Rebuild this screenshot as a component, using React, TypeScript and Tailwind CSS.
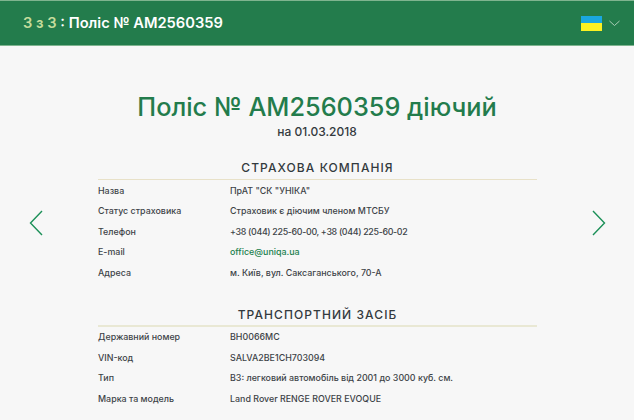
const font = { fontFamily: '"Inter", "Noto Sans", sans-serif' };

const companyRows: [string, string][] = [
  ['Назва', 'ПрАТ "СК "УНІКА"'],
  ['Статус страховика', 'Страховик є діючим членом МТСБУ'],
  ['Телефон', '+38 (044) 225-60-00, +38 (044) 225-60-02'],
  ['E-mail', 'office@uniqa.ua'],
  ['Адреса', 'м. Київ, вул. Саксаганського, 70-А'],
];

const vehicleRows: [string, string][] = [
  ['Державний номер', 'ВН0066МС'],
  ['VIN-код', 'SALVA2BE1CH703094'],
  ['Тип', 'В3: легковий автомобіль від 2001 до 3000 куб. см.'],
  ['Марка та модель', 'Land Rover RENGE ROVER EVOQUE'],
];

function Section({ title, rows, rule }: { title: string; rows: [string, string][]; rule: string }) {
  return (
    <section>
      <h2 className={`h-[22px] border-b text-center text-[12px] leading-[19px] font-medium tracking-[0.09em] text-[#333a3e] ${rule}`}>
        {title}
      </h2>
      <div>
        {rows.map(([label, value]) => (
          <div key={label} className="flex h-[20.5px] items-center text-[8.9px] font-medium text-[#3d4347]">
            <div className="w-[132px] shrink-0">{label}</div>
            <div className={value.includes('@') ? 'text-[#20804d]' : value.startsWith('+') ? 'tracking-[-0.037em]' : ''}>{value}</div>
          </div>
        ))}
      </div>
    </section>
  );
}

function Arrow({ flip }: { flip?: boolean }) {
  return (
    <svg width="14" height="26" viewBox="0 0 14 26" fill="none" className={flip ? 'rotate-180' : ''}>
      <path d="M13 1 1.5 13 13 25" stroke="#1c9058" strokeWidth="1.4" />
    </svg>
  );
}

export default function App() {
  return (
    <div className="h-[420px] w-[634px] overflow-hidden bg-[#f7f7f7]" style={font}>
      <header className="flex h-[46px] items-center justify-between border-y border-y-[#7fb48f] bg-[#237c4c] pr-[14px] pl-[23px]">
        <div className="text-[14.7px] font-semibold text-white">
          <span className="text-[#c5dc9c]">3 з 3</span> : Поліс № АМ2560359
        </div>
        <div className="flex items-center gap-[7px]">
          <div className="h-[15px] w-[21px]">
            <div className="h-[7.5px] bg-[#1aa7e0]" />
            <div className="h-[7.5px] bg-[#fbf122]" />
          </div>
          <svg width="11" height="7" viewBox="0 0 11 7" fill="none">
            <path d="M.5 1 5.5 5.5 10.5 1" stroke="#a9cdb6" strokeWidth="1" />
          </svg>
        </div>
      </header>
      <main className="text-center">
        <h1 className="mt-[45px] text-[25.3px] leading-[32px] font-medium text-[#237c4c]">Поліс № АМ2560359 діючий</h1>
        <p className="text-[12px] leading-[18px] font-medium text-[#333a3e]">на 01.03.2018</p>
      </main>
      <div className="mt-[17px] flex justify-between pr-[28px] pl-[29px] text-left">
        <div className="mt-[52px]">
          <Arrow />
        </div>
        <div className="w-[439px]">
          <Section title="СТРАХОВА КОМПАНІЯ" rows={companyRows} rule="border-b-[#e8e1c8]" />
          <div className="h-[22px]" />
          <Section title="ТРАНСПОРТНИЙ ЗАСІБ" rows={vehicleRows} rule="border-b-2 border-b-[#e9e8d4]" />
        </div>
        <div className="mt-[52px]">
          <Arrow flip />
        </div>
      </div>
    </div>
  );
}
